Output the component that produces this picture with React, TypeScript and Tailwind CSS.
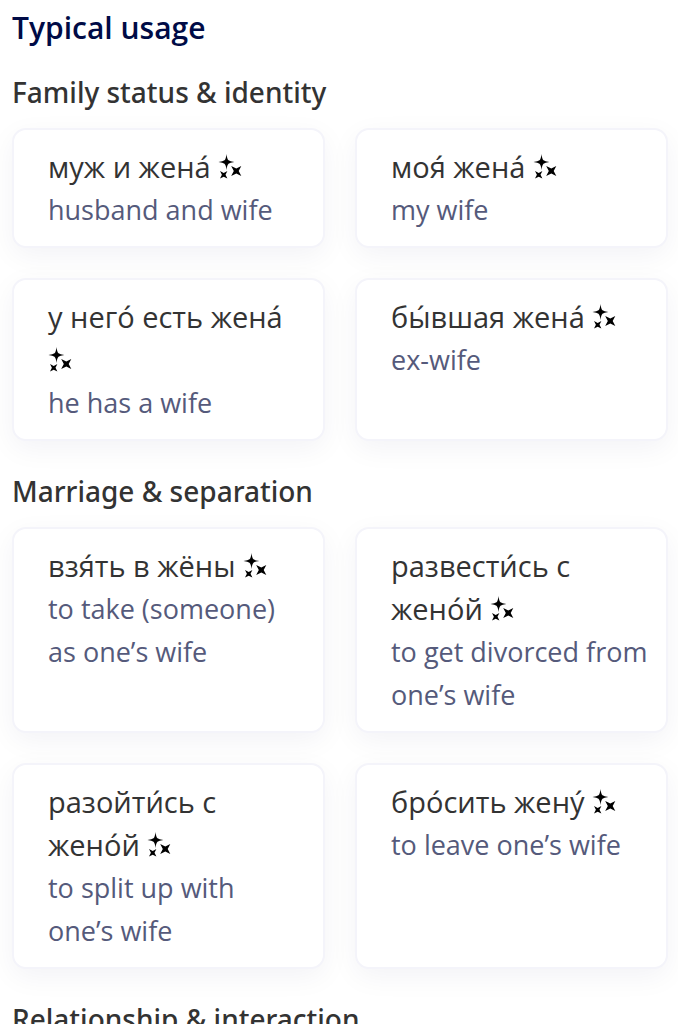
type Phrase = { ru: string; en: string };

const groups: { title: string; phrases: Phrase[] }[] = [
  {
    title: "Family status & identity",
    phrases: [
      { ru: "муж и жена́", en: "husband and wife" },
      { ru: "моя́ жена́", en: "my wife" },
      { ru: "у него́ есть жена́", en: "he has a wife" },
      { ru: "бы́вшая жена́", en: "ex-wife" },
    ],
  },
  {
    title: "Marriage & separation",
    phrases: [
      { ru: "взя́ть в жёны", en: "to take (someone) as one’s wife" },
      { ru: "развести́сь с жено́й", en: "to get divorced from one’s wife" },
      { ru: "разойти́сь с жено́й", en: "to split up with one’s wife" },
      { ru: "бро́сить жену́", en: "to leave one’s wife" },
    ],
  },
  { title: "Relationship & interaction", phrases: [] },
];

function Sparkles() {
  return (
    <svg viewBox="0 0 24 26" className="h-[26px] w-6" fill="black" aria-hidden="true">
      <path d="M8.5 0 Q9 5 10.5 6.3 Q12 7.5 16.3 8 Q12 8.5 10.5 9.7 Q9 11 8.5 16 Q8 11 6.5 9.7 Q5 8.5 0.5 8 Q5 7.5 6.5 6.3 Q8 5 8.5 0Z" />
      <path d="M13.2 12 L18.3 14.4 L23.3 12 L20.7 17 L23.3 22 L18.3 19.6 L13.2 22 L15.8 17Z" />
      <path d="M2 17 L5.7 18.9 L9.4 17 L7.5 20.8 L9.4 24.6 L5.7 22.7 L2 24.6 L3.9 20.8Z" />
    </svg>
  );
}

function PhraseCard({ ru, en }: Phrase) {
  return (
    <li className="rounded-[14px] border-2 border-[#f4f4fa] bg-white py-[15px] pr-[17px] pl-[34px] shadow-[0_8px_28px_rgba(10,10,80,0.05)]">
      <p lang="ru" className="text-[29px] leading-[43px] text-[#333]">
        {ru}{" "}
        <button type="button" aria-label={`Explain ${ru}`} className="cursor-pointer align-[-2px]">
          <Sparkles />
        </button>
      </p>
      <p className="text-[27px] leading-[43px] text-[#555a7b]">{en}</p>
    </li>
  );
}

export default function App() {
  return (
    <main className="bg-white pt-1 pr-[10px] pl-3 font-['Open_Sans','Noto_Sans',sans-serif]">
      <h2 className="text-[30px] leading-12 font-semibold text-[#000b46]">Typical usage</h2>
      {groups.map((group) => (
        <section key={group.title} className="pt-[18px]">
          <h3 className="font-['Noto_Sans','Open_Sans',sans-serif] text-[28px] leading-11 font-medium text-[#333]">
            {group.title}
          </h3>
          <ul className="mt-[14px] mb-[10px] grid grid-cols-2 gap-[30px]">
            {group.phrases.map((phrase) => (
              <PhraseCard key={phrase.ru} {...phrase} />
            ))}
          </ul>
        </section>
      ))}
    </main>
  );
}
